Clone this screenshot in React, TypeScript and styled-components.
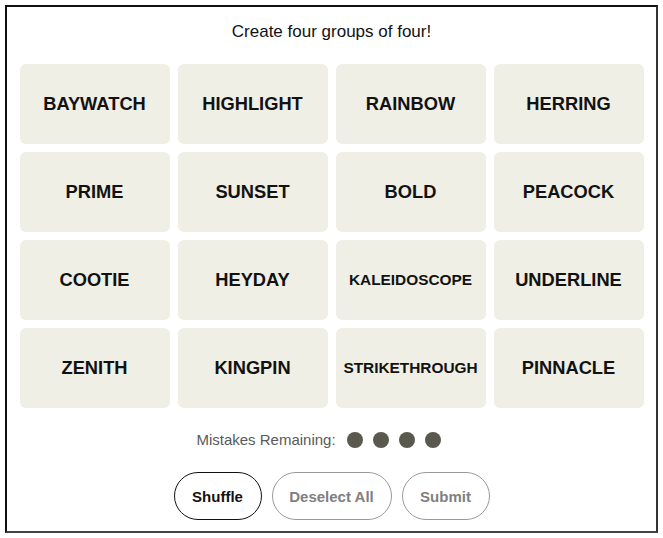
import styled, { createGlobalStyle } from "styled-components";

const GlobalStyle = createGlobalStyle`
  body {
    margin: 0;
    background: #fff;
    font-family: "Liberation Sans", Arial, sans-serif;
  }
`;

const Frame = styled.div`
  box-sizing: border-box;
  width: 653px;
  height: 528px;
  margin: 5px;
  border: 2px solid #111;
  border-right-color: #333;
  border-bottom-color: #444;
  display: flex;
  flex-direction: column;
  align-items: center;
`;

const Title = styled.p`
  margin: 15px 0 0;
  height: 20px;
  line-height: 20px;
  font-size: 17px;
  color: #121212;
`;

const Board = styled.div`
  margin-top: 22px;
  display: grid;
  grid-template-columns: repeat(4, 150px);
  grid-auto-rows: 80px;
  gap: 8px;
`;

const Tile = styled.button<{ $small?: boolean }>`
  border: none;
  border-radius: 6px;
  background: #efefe6;
  color: #121212;
  font-family: "Liberation Sans", Arial, sans-serif;
  font-weight: 700;
  font-size: ${(p) => (p.$small ? "15.4px" : "18.3px")};
  text-transform: uppercase;
  padding: 0;
  display: flex;
  align-items: center;
  justify-content: center;
`;

const Mistakes = styled.div`
  margin-top: 23px;
  margin-right: 26px;
  display: flex;
  align-items: center;
  gap: 11px;
  font-size: 15px;
  color: #5a5a5a;
`;

const Dots = styled.div`
  display: flex;
  gap: 10px;
`;

const Dot = styled.span`
  width: 16px;
  height: 16px;
  border-radius: 50%;
  background: #5a594e;
`;

const Actions = styled.div`
  margin-top: 24px;
  display: flex;
  gap: 10px;
`;

const Pill = styled.button<{ $w: number; $disabled?: boolean }>`
  box-sizing: border-box;
  width: ${(p) => p.$w}px;
  height: 48px;
  border-radius: 24px;
  background: #fff;
  border: 1px solid ${(p) => (p.$disabled ? "#9a9a9a" : "#121212")};
  color: ${(p) => (p.$disabled ? "#7f7f7f" : "#121212")};
  font-family: "Liberation Sans", Arial, sans-serif;
  font-weight: 700;
  font-size: 15px;
  padding: 0;
`;

const words = [
  "Baywatch", "Highlight", "Rainbow", "Herring",
  "Prime", "Sunset", "Bold", "Peacock",
  "Cootie", "Heyday", "Kaleidoscope", "Underline",
  "Zenith", "Kingpin", "Strikethrough", "Pinnacle",
];

export default function App() {
  return (
    <>
      <GlobalStyle />
      <Frame>
        <Title>Create four groups of four!</Title>
        <Board>
          {words.map((w) => (
            <Tile key={w} $small={w.length > 10}>
              {w}
            </Tile>
          ))}
        </Board>
        <Mistakes>
          Mistakes Remaining:
          <Dots>
            {[0, 1, 2, 3].map((i) => (
              <Dot key={i} />
            ))}
          </Dots>
        </Mistakes>
        <Actions>
          <Pill $w={88}>Shuffle</Pill>
          <Pill $w={120} $disabled>
            Deselect All
          </Pill>
          <Pill $w={88} $disabled>
            Submit
          </Pill>
        </Actions>
      </Frame>
    </>
  );
}
